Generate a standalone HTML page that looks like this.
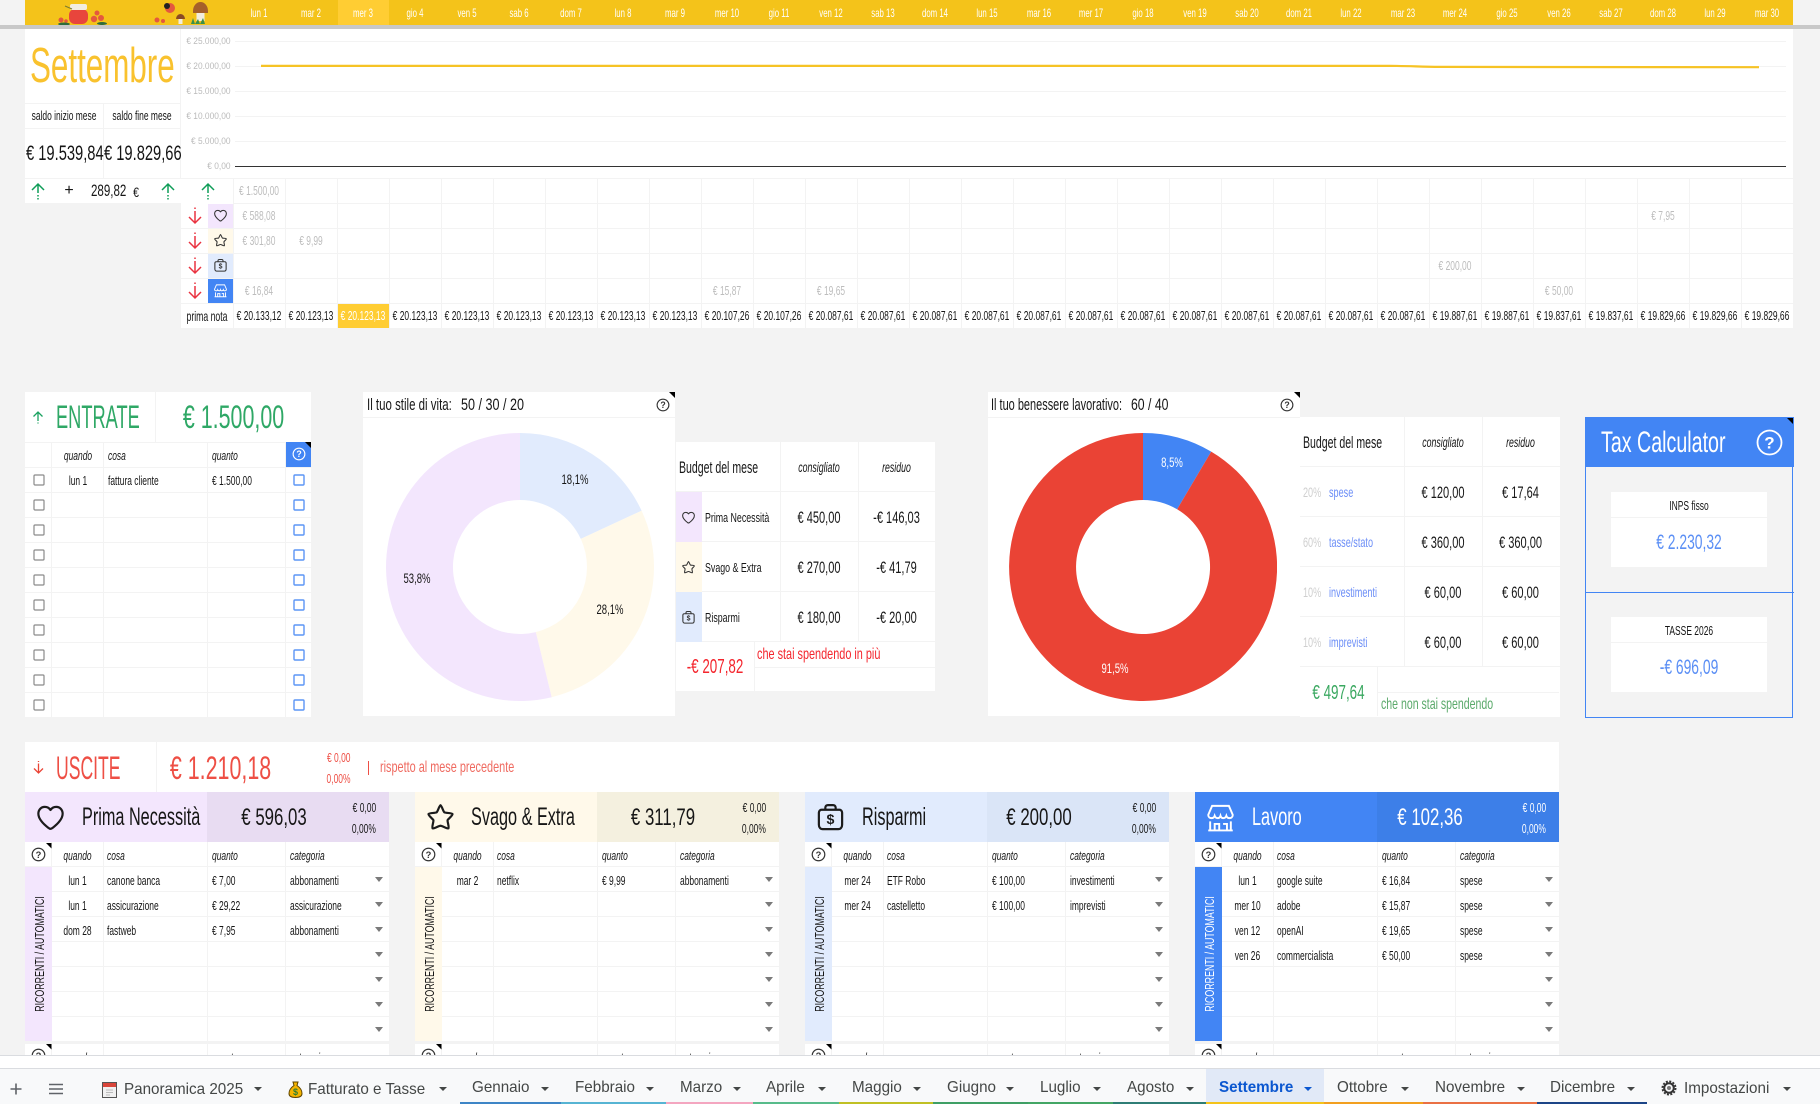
<!DOCTYPE html>
<html lang="it"><head><meta charset="utf-8"><title>Settembre</title>
<style>
html,body{margin:0;padding:0;background:#f3f3f3;width:1820px;height:1104px;overflow:hidden}
#p{position:relative;width:1820px;height:1104px;overflow:hidden;font-family:"Liberation Sans",sans-serif;color:#161616;font-size:13px}
.a{position:absolute}
.w{position:absolute;background:#fff}
.c,.l,.r{position:absolute;display:flex;align-items:center;white-space:nowrap;height:25px;transform:scaleX(var(--s,.65))}
.c{justify-content:center}
.l{justify-content:flex-start;transform-origin:0 50%}
.r{justify-content:flex-end;transform-origin:100% 50%}
.i{font-style:italic}
.d{display:flex;position:absolute;left:233px;width:1560px}
.d span{flex:0 0 52px;width:52px;min-width:0;height:25px;display:flex;align-items:center;justify-content:center;white-space:nowrap;transform:scaleX(.65)}
.hl{position:absolute;background:#f3f3f3;height:1px}
.vl{position:absolute;background:#f3f3f3;width:1px}
.t{position:absolute;top:842px;width:364px;height:213px;background:
linear-gradient(#f3f3f3,#f3f3f3) 26px 0/1px 100% no-repeat,
linear-gradient(#f3f3f3,#f3f3f3) 78px 0/1px 100% no-repeat,
linear-gradient(#f3f3f3,#f3f3f3) 182px 0/1px 100% no-repeat,
linear-gradient(#f3f3f3,#f3f3f3) 260px 0/1px 100% no-repeat,
repeating-linear-gradient(#fff 0 24px,#f3f3f3 24px 25px)}
.t .q{left:27px;width:51px}.t .n{left:82px}.t .h{left:186.5px}.t .k{left:264.5px}
.t .c,.t .l{margin-top:1px}
.gap{position:absolute;left:0;top:199px;width:364px;height:3px;background:#f3f3f3}
.lb{position:absolute;left:0;top:25px;width:26.5px;height:174px}
.rot{position:absolute;left:-86px;top:74px;width:200px;height:26px;display:flex;align-items:center;justify-content:center;white-space:nowrap;font-size:13px;transform:rotate(-90deg) scaleX(.68)}
.ch{position:absolute;top:792px;width:364px;height:50px}
.ch .rt{position:absolute;left:182px;top:0;width:182px;height:50px}
.tab{position:absolute;left:0;top:0;font-size:16px;height:36px;color:#444746;--s:.95}
.st{position:absolute;top:1101.5px;height:2.5px}
.tg{position:absolute;top:1086.5px;width:0;height:0;border-left:4px solid transparent;border-right:4px solid transparent;border-top:4.5px solid #444746}
</style></head><body><div id="p">
<svg width="0" height="0" style="position:absolute">
<symbol id="heart" viewBox="0 0 24 24"><path d="M10.6 20.2C5.6 16.4 2.6 13 2.6 9 2.6 6 4.8 3.8 7.6 3.8c1.9 0 3.4.9 4.4 2.4 1-1.5 2.5-2.4 4.4-2.4 2.8 0 5 2.2 5 5.2 0 4-3 7.4-8 11.2-.6.4-1.2.6-1.8.6z" fill="none" stroke="currentColor" stroke-width="1.7" stroke-linejoin="round"/></symbol>
<symbol id="star" viewBox="0 0 24 24"><path d="M12 2.500C13 3 14 7 15 8c1 .6 5.500.3 6.300 1.300.4 1-3.300 3.700-3.800 4.700-.3 1.200 1.400 5.500.6 6.400-.9.600-4.800-2-6.100-2s-5.200 2.600-6.100 2c-.8-.9.900-5.200.6-6.400C6 13 2.300 10.300 2.700 9.300 3.500 8.300 8 8.600 9 8c1-1 2-5 3-5.500z" fill="none" stroke="currentColor" stroke-width="1.700" stroke-linejoin="round"/></symbol>
<symbol id="bag" viewBox="0 0 24 24"><path d="M8 6V4.400C8 3 9 2.400 10 2.400h4c1 0 2 .6 2 2V6M5 6h14c1 0 2 1 2 2.200v9.400c0 2-1.200 3.400-3 3.400H6c-1.800 0-3-1.400-3-3.400V8.200C3 7 4 6 5 6z" fill="none" stroke="currentColor" stroke-width="1.700"/><text x="12" y="17" font-size="11" font-weight="700" text-anchor="middle" fill="currentColor" font-family="Liberation Sans">$</text></symbol>
<symbol id="store" viewBox="0 0 24 24"><path d="M5.500 3h13l3 7c0 1.800-1.400 2.500-2.400 2.500-1.300 0-2.300-.8-2.600-1.800-.4 1-1.300 1.800-2.300 1.800s-1.900-.8-2.200-1.800c-.3 1-1.200 1.800-2.200 1.800s-1.900-.8-2.300-1.800c-.3 1-1.300 1.800-2.600 1.800-1 0-2.400-.7-2.400-2.500zM4 15v7M20 15v7M2.500 22h19M7.500 17h3.500v5H7.500zM14 17h3v5" fill="none" stroke="currentColor" stroke-width="1.500"/></symbol>
<symbol id="qm" viewBox="0 0 16 16"><circle cx="8" cy="8" r="6.700" fill="none" stroke="currentColor" stroke-width="1.300"/><text x="8" y="11.500" font-size="10" font-weight="700" text-anchor="middle" fill="currentColor" font-family="Liberation Sans">?</text></symbol>
<symbol id="up" viewBox="0 0 16 18"><path d="M8 2v9M8 13v1.500M8 16v1.500M2 8l6-6 6 6" fill="none" stroke="currentColor" stroke-width="1.500"/></symbol>
<symbol id="dn" viewBox="0 0 16 18"><path d="M8 .5v1.500M8 4v12M2 10l6 6 6-6" fill="none" stroke="currentColor" stroke-width="1.500"/></symbol>
<symbol id="drops" viewBox="0 0 9 175"><path fill="#7a7a7a" d="M0 10h8l-4 5zM0 35h8l-4 5zM0 60h8l-4 5zM0 85h8l-4 5zM0 110h8l-4 5zM0 135h8l-4 5zM0 160h8l-4 5z"/></symbol>
<symbol id="corner" viewBox="0 0 6 6"><path d="M0 0h6v6z" fill="#000"/></symbol>
</svg>

<!-- top bar -->
<div class="a" style="left:25px;top:0;width:1768px;height:25px;background:#f4c31a"></div>
<div class="a" style="left:0;top:25px;width:1820px;height:4px;background:#c8c8c8"></div>
<div class="a" style="left:338px;top:0;width:51px;height:25px;background:#ffcd33"></div>
<svg class="a" style="left:40px;top:0" width="190" height="25">
<rect x="29" y="9" width="19" height="15" rx="6" fill="#e8453c"/><rect x="30" y="4" width="17" height="6" rx="2" fill="#f2ede0"/><path d="M25 6l7 3" stroke="#7a7a30"/><circle cx="21" cy="20" r="2.500" fill="#e4583e"/><circle cx="26" cy="21" r="1.800" fill="#e4583e"/><circle cx="57" cy="13" r="2.500" fill="#e4583e"/><circle cx="54" cy="19" r="3.200" fill="#e4583e"/><circle cx="61" cy="18" r="3" fill="#e4583e"/><ellipse cx="62" cy="23.500" rx="5" ry="1.500" fill="#2e6b3a"/><ellipse cx="24" cy="24" rx="6" ry="1.500" fill="#2e6b3a"/>
<circle cx="130" cy="8" r="5" fill="#e4583e"/><circle cx="127" cy="6" r="3" fill="#222"/><circle cx="117" cy="20" r="2.500" fill="#e4583e"/><circle cx="123" cy="21" r="2" fill="#e4583e"/><path d="M136 19a4.500 5 0 0 1 9 0z" fill="#8a4a24"/><rect x="138.500" y="19" width="4" height="5" fill="#f2ede0"/><path d="M153 11a7.500 9 0 0 1 15 0v2h-15z" fill="#a5602a"/><rect x="156.500" y="13" width="8" height="8" fill="#f2ede0"/><path d="M151 24l2-6 2 6 3-5 2 5 3-6 2 6z" fill="#3b8f48"/>
</svg>
<div class="d" style="top:0;color:#fff;font-size:12px"><span>lun 1</span><span>mar 2</span><span>mer 3</span><span>gio 4</span><span>ven 5</span><span>sab 6</span><span>dom 7</span><span>lun 8</span><span>mar 9</span><span>mer 10</span><span>gio 11</span><span>ven 12</span><span>sab 13</span><span>dom 14</span><span>lun 15</span><span>mar 16</span><span>mer 17</span><span>gio 18</span><span>ven 19</span><span>sab 20</span><span>dom 21</span><span>lun 22</span><span>mar 23</span><span>mer 24</span><span>gio 25</span><span>ven 26</span><span>sab 27</span><span>dom 28</span><span>lun 29</span><span>mar 30</span></div>

<!-- month panel -->
<div class="w" style="left:25px;top:29px;width:155px;height:149px"></div>
<div class="hl" style="left:25px;top:103px;width:155px"></div>
<div class="hl" style="left:25px;top:128px;width:155px"></div>
<div class="vl" style="left:103px;top:103px;height:75px"></div>
<div class="l" style="left:30px;top:36px;height:60px;font-size:49px;color:#f9c22e;--s:.64">Settembre</div>
<div class="c" style="left:25px;top:103px;width:78px">saldo inizio mese</div>
<div class="c" style="left:104px;top:103px;width:76px">saldo fine mese</div>
<div class="l" style="left:26px;top:141px;font-size:21px;--s:.7">€ 19.539,84</div>
<div class="a" style="left:104px;top:129px;width:76.500px;height:49px;overflow:hidden"><div class="l" style="left:0;top:12px;font-size:21px;--s:.7">€ 19.829,66</div></div>

<!-- chart -->
<div class="w" style="left:181px;top:29px;width:1612px;height:149px"></div>
<div class="hl" style="left:234.500px;top:41px;width:1551px"></div>
<div class="hl" style="left:234.500px;top:66px;width:1551px"></div>
<div class="hl" style="left:234.500px;top:91px;width:1551px"></div>
<div class="hl" style="left:234.500px;top:116px;width:1551px"></div>
<div class="hl" style="left:234.500px;top:141px;width:1551px"></div>
<div class="a" style="left:234.500px;top:166px;width:1551px;height:1px;background:#333"></div>
<div class="r" style="left:170px;width:60.500px;top:29px;font-size:9.500px;color:#bbb;--s:.88">€ 25.000,00</div>
<div class="r" style="left:170px;width:60.500px;top:54px;font-size:9.500px;color:#bbb;--s:.88">€ 20.000,00</div>
<div class="r" style="left:170px;width:60.500px;top:79px;font-size:9.500px;color:#bbb;--s:.88">€ 15.000,00</div>
<div class="r" style="left:170px;width:60.500px;top:104px;font-size:9.500px;color:#bbb;--s:.88">€ 10.000,00</div>
<div class="r" style="left:170px;width:60.500px;top:129px;font-size:9.500px;color:#bbb;--s:.88">€ 5.000,00</div>
<div class="r" style="left:170px;width:60.500px;top:154px;font-size:9.500px;color:#bbb;--s:.88">€ 0,00</div>
<svg class="a" style="left:0;top:60px" width="1820" height="12"><path d="M261 5.900H1390C1410 5.900 1420 6.800 1440 6.900L1759 7.200" fill="none" stroke="#f6c325" stroke-width="2.200"/></svg>

<!-- summary row -->
<div class="w" style="left:25px;top:178px;width:208px;height:25px"></div>
<div class="hl" style="left:25px;top:178px;width:208px"></div>
<svg class="a" style="left:30px;top:182px;color:#0f9d58" width="16" height="18"><use href="#up"/></svg>
<svg class="a" style="left:160px;top:182px;color:#0f9d58" width="16" height="18"><use href="#up"/></svg>
<svg class="a" style="left:199.500px;top:182px;color:#0f9d58" width="16" height="18"><use href="#up"/></svg>
<div class="c" style="left:59px;width:20px;top:178px;font-size:16px;--s:1">+</div>
<div class="l" style="left:91px;top:178px;font-size:17px;--s:.68">289,82</div>
<div class="c" style="left:126px;width:20px;top:179px;font-size:14px;--s:.75">€</div>

<!-- day grid -->
<div class="a" style="left:233px;top:178px;width:1560px;height:150px;background:repeating-linear-gradient(90deg,#f3f3f3 0 1px,transparent 1px 52px),repeating-linear-gradient(#f3f3f3 0 1px,#fff 1px 25px)"></div>
<div class="w" style="left:181px;top:203px;width:52px;height:125px"></div>
<div class="hl" style="left:181px;top:228px;width:52px"></div><div class="hl" style="left:181px;top:253px;width:52px"></div><div class="hl" style="left:181px;top:278px;width:52px"></div><div class="hl" style="left:181px;top:303px;width:52px"></div>
<div class="a" style="left:207.500px;top:204px;width:25.500px;height:24px;background:#f3e6fd"></div>
<div class="a" style="left:207.500px;top:229px;width:25.500px;height:24px;background:#fff9ea"></div>
<div class="a" style="left:207.500px;top:254px;width:25.500px;height:24px;background:#e1ebfd"></div>
<div class="a" style="left:208px;top:279px;width:25px;height:24px;background:#4285f4"></div>
<svg class="a" style="left:186.500px;top:207px;color:#ea3340" width="16" height="18"><use href="#dn"/></svg>
<svg class="a" style="left:186.500px;top:232px;color:#ea3340" width="16" height="18"><use href="#dn"/></svg>
<svg class="a" style="left:186.500px;top:257px;color:#ea3340" width="16" height="18"><use href="#dn"/></svg>
<svg class="a" style="left:186.500px;top:282px;color:#ea3340" width="16" height="18"><use href="#dn"/></svg>
<svg class="a" style="left:213px;top:208px;color:#333" width="15" height="15"><use href="#heart"/></svg>
<svg class="a" style="left:213px;top:233px;color:#333" width="15" height="15"><use href="#star"/></svg>
<svg class="a" style="left:213px;top:258px;color:#333" width="15" height="15"><use href="#bag"/></svg>
<svg class="a" style="left:213px;top:283px;color:#fff" width="15" height="15"><use href="#store"/></svg>
<div class="a" style="left:338px;top:304px;width:51px;height:24px;background:#ffcd33"></div>
<div class="c" style="left:181px;width:52px;top:303.500px;font-size:14px;--s:.62">prima nota</div>
<div style="color:#bdbdbd">
<div class="c" style="left:233px;width:52px;top:178px">€ 1.500,00</div>
<div class="c" style="left:233px;width:52px;top:203px">€ 588,08</div>
<div class="c" style="left:233px;width:52px;top:228px">€ 301,80</div>
<div class="c" style="left:285px;width:52px;top:228px">€ 9,99</div>
<div class="c" style="left:233px;width:52px;top:278px">€ 16,84</div>
<div class="c" style="left:701px;width:52px;top:278px">€ 15,87</div>
<div class="c" style="left:805px;width:52px;top:278px">€ 19,65</div>
<div class="c" style="left:1429px;width:52px;top:253px">€ 200,00</div>
<div class="c" style="left:1533px;width:52px;top:278px">€ 50,00</div>
<div class="c" style="left:1637px;width:52px;top:203px">€ 7,95</div>
</div>
<div class="d" style="top:303px;font-size:13px"><span>€ 20.133,12</span><span>€ 20.123,13</span><span style="color:#fff">€ 20.123,13</span><span>€ 20.123,13</span><span>€ 20.123,13</span><span>€ 20.123,13</span><span>€ 20.123,13</span><span>€ 20.123,13</span><span>€ 20.123,13</span><span>€ 20.107,26</span><span>€ 20.107,26</span><span>€ 20.087,61</span><span>€ 20.087,61</span><span>€ 20.087,61</span><span>€ 20.087,61</span><span>€ 20.087,61</span><span>€ 20.087,61</span><span>€ 20.087,61</span><span>€ 20.087,61</span><span>€ 20.087,61</span><span>€ 20.087,61</span><span>€ 20.087,61</span><span>€ 20.087,61</span><span>€ 19.887,61</span><span>€ 19.887,61</span><span>€ 19.837,61</span><span>€ 19.837,61</span><span>€ 19.829,66</span><span>€ 19.829,66</span><span>€ 19.829,66</span></div>

<!-- ENTRATE -->
<div class="w" style="left:25px;top:392px;width:286px;height:50px"></div>
<div class="vl" style="left:155px;top:392px;height:50px"></div>
<svg class="a" style="left:30px;top:410px;color:#1aa260" width="16" height="15"><path d="M8 2v9M8 12.500v1M3.500 6.500L8 2l4.500 4.500" fill="none" stroke="currentColor" stroke-width="1.300"/></svg>
<div class="l" style="left:56px;top:392.500px;height:50px;font-size:32px;color:#2fa866;--s:.57">ENTRATE</div>
<div class="c" style="left:183px;width:101px;top:392.500px;height:50px;font-size:32px;color:#2fa866;--s:.67">€ 1.500,00</div>
<div class="a" style="left:25px;top:442px;width:286px;height:275px;background:
linear-gradient(#f3f3f3,#f3f3f3) 26px 0/1px 100% no-repeat,
linear-gradient(#f3f3f3,#f3f3f3) 78px 0/1px 100% no-repeat,
linear-gradient(#f3f3f3,#f3f3f3) 182px 0/1px 100% no-repeat,
linear-gradient(#f3f3f3,#f3f3f3) 260px 0/1px 100% no-repeat,
repeating-linear-gradient(#f3f3f3 0 1px,#fff 1px 25px)"></div>
<div class="a" style="left:286px;top:442px;width:25px;height:25px;background:#4285f4"></div>
<svg class="a" style="left:291.500px;top:447px;color:#fff" width="14" height="14"><use href="#qm"/></svg>
<svg class="a" style="left:305px;top:442px" width="6" height="6"><use href="#corner"/></svg>
<div class="c i" style="left:52px;width:52px;top:443px">quando</div>
<div class="l i" style="left:107.500px;top:443px">cosa</div>
<div class="l i" style="left:211.500px;top:443px">quanto</div>
<div class="c" style="left:52px;width:52px;top:468px">lun 1</div>
<div class="l" style="left:107.500px;top:468px">fattura cliente</div>
<div class="l" style="left:211.500px;top:468px">€ 1.500,00</div>
<svg class="a" style="left:33px;top:467px" width="12" height="250"><path fill="none" stroke="#8a8a8a" stroke-width="1.200" d="M2 8h8a1 1 0 0 1 1 1v8a1 1 0 0 1-1 1H2a1 1 0 0 1-1-1V9a1 1 0 0 1 1-1zM2 33h8a1 1 0 0 1 1 1v8a1 1 0 0 1-1 1H2a1 1 0 0 1-1-1v-8a1 1 0 0 1 1-1zM2 58h8a1 1 0 0 1 1 1v8a1 1 0 0 1-1 1H2a1 1 0 0 1-1-1v-8a1 1 0 0 1 1-1zM2 83h8a1 1 0 0 1 1 1v8a1 1 0 0 1-1 1H2a1 1 0 0 1-1-1v-8a1 1 0 0 1 1-1zM2 108h8a1 1 0 0 1 1 1v8a1 1 0 0 1-1 1H2a1 1 0 0 1-1-1v-8a1 1 0 0 1 1-1zM2 133h8a1 1 0 0 1 1 1v8a1 1 0 0 1-1 1H2a1 1 0 0 1-1-1v-8a1 1 0 0 1 1-1zM2 158h8a1 1 0 0 1 1 1v8a1 1 0 0 1-1 1H2a1 1 0 0 1-1-1v-8a1 1 0 0 1 1-1zM2 183h8a1 1 0 0 1 1 1v8a1 1 0 0 1-1 1H2a1 1 0 0 1-1-1v-8a1 1 0 0 1 1-1zM2 208h8a1 1 0 0 1 1 1v8a1 1 0 0 1-1 1H2a1 1 0 0 1-1-1v-8a1 1 0 0 1 1-1zM2 233h8a1 1 0 0 1 1 1v8a1 1 0 0 1-1 1H2a1 1 0 0 1-1-1v-8a1 1 0 0 1 1-1z"/></svg>
<svg class="a" style="left:293px;top:467px" width="12" height="250"><path fill="none" stroke="#5c95f5" stroke-width="1.400" d="M2 8h8a1 1 0 0 1 1 1v8a1 1 0 0 1-1 1H2a1 1 0 0 1-1-1V9a1 1 0 0 1 1-1zM2 33h8a1 1 0 0 1 1 1v8a1 1 0 0 1-1 1H2a1 1 0 0 1-1-1v-8a1 1 0 0 1 1-1zM2 58h8a1 1 0 0 1 1 1v8a1 1 0 0 1-1 1H2a1 1 0 0 1-1-1v-8a1 1 0 0 1 1-1zM2 83h8a1 1 0 0 1 1 1v8a1 1 0 0 1-1 1H2a1 1 0 0 1-1-1v-8a1 1 0 0 1 1-1zM2 108h8a1 1 0 0 1 1 1v8a1 1 0 0 1-1 1H2a1 1 0 0 1-1-1v-8a1 1 0 0 1 1-1zM2 133h8a1 1 0 0 1 1 1v8a1 1 0 0 1-1 1H2a1 1 0 0 1-1-1v-8a1 1 0 0 1 1-1zM2 158h8a1 1 0 0 1 1 1v8a1 1 0 0 1-1 1H2a1 1 0 0 1-1-1v-8a1 1 0 0 1 1-1zM2 183h8a1 1 0 0 1 1 1v8a1 1 0 0 1-1 1H2a1 1 0 0 1-1-1v-8a1 1 0 0 1 1-1zM2 208h8a1 1 0 0 1 1 1v8a1 1 0 0 1-1 1H2a1 1 0 0 1-1-1v-8a1 1 0 0 1 1-1zM2 233h8a1 1 0 0 1 1 1v8a1 1 0 0 1-1 1H2a1 1 0 0 1-1-1v-8a1 1 0 0 1 1-1z"/></svg>

<!-- Pie 1 -->
<div class="w" style="left:363px;top:392px;width:312px;height:324px"></div>
<div class="hl" style="left:363px;top:417px;width:312px"></div>
<div class="l" style="left:367.400px;top:392px;font-size:17px;--s:.675">Il tuo stile di vita:</div>
<div class="l" style="left:461px;top:392px;font-size:17px;--s:.74">50 / 30 / 20</div>
<svg class="a" style="left:655.500px;top:398px;color:#333" width="14" height="14"><use href="#qm"/></svg>
<svg class="a" style="left:669px;top:392px" width="6" height="6"><use href="#corner"/></svg>
<svg class="a" style="left:385.600px;top:433px" width="268" height="268" viewBox="-134 -134 268 268">
<path fill="#e1ebfd" d="M0-134A134 134 0 0 1 121.600-56.300L60.800-28.100A67 67 0 0 0 0-67Z"/>
<path fill="#fff9ea" d="M121.600-56.300A134 134 0 0 1 31.700 130.200L15.800 65.100A67 67 0 0 0 60.800-28.100Z"/>
<path fill="#f3e6fd" d="M31.700 130.200A134 134 0 1 1 0-134L0-67A67 67 0 1 0 15.800 65.100Z"/>
</svg>
<div class="c" style="left:545px;width:60px;top:466.500px;font-size:14px;--s:.68">18,1%</div>
<div class="c" style="left:580px;width:60px;top:596.500px;font-size:14px;--s:.68">28,1%</div>
<div class="c" style="left:386.500px;width:60px;top:565.500px;font-size:14px;--s:.68">53,8%</div>

<!-- Budget 1 -->
<div class="a" style="left:675.500px;top:442px;width:259.500px;height:250px;background:repeating-linear-gradient(#fff 0 49px,#f3f3f3 49px 50px)"></div>
<div class="vl" style="left:779.500px;top:442px;height:200px"></div>
<div class="vl" style="left:857.500px;top:442px;height:200px"></div>
<div class="vl" style="left:753.500px;top:642px;height:50px"></div>
<div class="hl" style="left:754px;top:667px;width:181px"></div>
<div class="a" style="left:675.500px;top:492px;width:26px;height:49.500px;background:#f3e6fd"></div>
<div class="a" style="left:675.500px;top:542px;width:26px;height:49.500px;background:#fff9ea"></div>
<div class="a" style="left:675.500px;top:592px;width:26px;height:49.500px;background:#e1ebfd"></div>
<svg class="a" style="left:681px;top:509.500px;color:#333" width="15" height="15"><use href="#heart"/></svg>
<svg class="a" style="left:681px;top:559.500px;color:#333" width="15" height="15"><use href="#star"/></svg>
<svg class="a" style="left:681px;top:609.500px;color:#333" width="15" height="15"><use href="#bag"/></svg>
<div class="l" style="left:679px;top:455px;font-size:17px;--s:.62">Budget del mese</div>
<div class="c i" style="left:780px;width:78px;top:455px;font-size:13.500px">consigliato</div>
<div class="c i" style="left:858px;width:77px;top:455px;font-size:13.500px">residuo</div>
<div class="l" style="left:705px;top:504.500px;--s:.68">Prima Necessità</div>
<div class="l" style="left:704.500px;top:554.500px;--s:.68">Svago &amp; Extra</div>
<div class="l" style="left:705px;top:604.500px;--s:.68">Risparmi</div>
<div class="c" style="left:780px;width:78px;top:505px;font-size:17px">€ 450,00</div>
<div class="c" style="left:858px;width:77px;top:505px;font-size:17px">-€ 146,03</div>
<div class="c" style="left:780px;width:78px;top:555px;font-size:17px">€ 270,00</div>
<div class="c" style="left:858px;width:77px;top:555px;font-size:17px">-€ 41,79</div>
<div class="c" style="left:780px;width:78px;top:605px;font-size:17px">€ 180,00</div>
<div class="c" style="left:858px;width:77px;top:605px;font-size:17px">-€ 20,00</div>
<div class="c" style="left:675.500px;width:78px;top:654.500px;font-size:20px;color:#f4252d;--s:.67">-€ 207,82</div>
<div class="l" style="left:757px;top:642.500px;font-size:16px;color:#f4252d;--s:.68">che stai spendendo in più</div>

<!-- Pie 2 -->
<div class="w" style="left:988px;top:392px;width:312px;height:324px"></div>
<div class="hl" style="left:988px;top:417px;width:312px"></div>
<div class="l" style="left:991.400px;top:392px;font-size:17px;--s:.645">Il tuo benessere lavorativo:</div>
<div class="l" style="left:1131px;top:392px;font-size:17px;--s:.72">60 / 40</div>
<svg class="a" style="left:1279.500px;top:398px;color:#333" width="14" height="14"><use href="#qm"/></svg>
<svg class="a" style="left:1294px;top:392px" width="6" height="6"><use href="#corner"/></svg>
<svg class="a" style="left:1009px;top:433px" width="268" height="268" viewBox="-134 -134 268 268">
<path fill="#4285f4" d="M0-134A134 134 0 0 1 68.200-115.400L34.100-57.700A67 67 0 0 0 0-67Z"/>
<path fill="#ea4335" d="M68.200-115.400A134 134 0 1 1 0-134L0-67A67 67 0 1 0 34.100-57.700Z"/>
</svg>
<div class="c" style="left:1141.500px;width:60px;top:449.500px;font-size:14px;color:#fff;--s:.68">8,5%</div>
<div class="c" style="left:1085px;width:60px;top:655.500px;font-size:14px;color:#fff;--s:.68">91,5%</div>

<!-- Budget 2 -->
<div class="a" style="left:1300px;top:417px;width:259.500px;height:300px;background:repeating-linear-gradient(#fff 0 49px,#f3f3f3 49px 50px)"></div>
<div class="vl" style="left:1403.500px;top:417px;height:250px"></div>
<div class="vl" style="left:1481.500px;top:417px;height:250px"></div>
<div class="vl" style="left:1377px;top:667px;height:50px"></div>
<div class="hl" style="left:1377px;top:692px;width:182px"></div>
<div class="a" style="left:1300px;top:716px;width:260px;height:1px;background:#fff"></div>
<div class="l" style="left:1303px;top:430px;font-size:17px;--s:.62">Budget del mese</div>
<div class="c i" style="left:1404px;width:78px;top:430px;font-size:13.500px">consigliato</div>
<div class="c i" style="left:1482px;width:77px;top:430px;font-size:13.500px">residuo</div>
<div style="color:#cfcfcf">
<div class="l" style="left:1303px;top:479.500px;font-size:14px">20%</div>
<div class="l" style="left:1303px;top:529.500px;font-size:14px">60%</div>
<div class="l" style="left:1303px;top:579.500px;font-size:14px">10%</div>
<div class="l" style="left:1303px;top:629.500px;font-size:14px">10%</div>
</div>
<div style="color:#6d8ff7">
<div class="l" style="left:1329px;top:479.500px;font-size:14px">spese</div>
<div class="l" style="left:1329px;top:529.500px;font-size:14px">tasse/stato</div>
<div class="l" style="left:1329px;top:579.500px;font-size:14px">investimenti</div>
<div class="l" style="left:1329px;top:629.500px;font-size:14px">imprevisti</div>
</div>
<div class="c" style="left:1404px;width:78px;top:480px;font-size:17px">€ 120,00</div>
<div class="c" style="left:1482px;width:77px;top:480px;font-size:17px">€ 17,64</div>
<div class="c" style="left:1404px;width:78px;top:530px;font-size:17px">€ 360,00</div>
<div class="c" style="left:1482px;width:77px;top:530px;font-size:17px">€ 360,00</div>
<div class="c" style="left:1404px;width:78px;top:580px;font-size:17px">€ 60,00</div>
<div class="c" style="left:1482px;width:77px;top:580px;font-size:17px">€ 60,00</div>
<div class="c" style="left:1404px;width:78px;top:630px;font-size:17px">€ 60,00</div>
<div class="c" style="left:1482px;width:77px;top:630px;font-size:17px">€ 60,00</div>
<div class="c" style="left:1300px;width:77px;top:680.500px;font-size:20px;color:#3aa860;--s:.67">€ 497,64</div>
<div class="l" style="left:1381px;top:692.500px;font-size:16px;color:#5aa96a;--s:.66">che non stai spendendo</div>

<!-- Tax -->
<div class="a" style="left:1585px;top:417px;width:206px;height:298.500px;border:1.500px solid #4285f4"></div>
<div class="a" style="left:1585px;top:417px;width:209px;height:50px;background:#4285f4"></div>
<div class="a" style="left:1585px;top:591.500px;width:209px;height:1.500px;background:#4285f4"></div>
<div class="l" style="left:1600.700px;top:418px;height:50px;font-size:30px;color:#fff;--s:.655">Tax Calculator</div>
<svg class="a" style="left:1755.500px;top:428.500px;color:#fff" width="27" height="27" viewBox="0 0 27 27"><circle cx="13.500" cy="13.500" r="12" fill="none" stroke="#fff" stroke-width="1.800"/><text x="13.500" y="19.500" font-size="17" font-weight="700" text-anchor="middle" fill="#fff" font-family="Liberation Sans">?</text></svg>
<svg class="a" style="left:1787px;top:418px" width="6" height="6"><use href="#corner"/></svg>
<div class="w" style="left:1611px;top:492px;width:156px;height:75px"></div>
<div class="hl" style="left:1611px;top:517px;width:156px"></div>
<div class="w" style="left:1611px;top:617px;width:156px;height:75px"></div>
<div class="hl" style="left:1611px;top:642px;width:156px"></div>
<div class="c" style="left:1611px;width:156px;top:492.500px">INPS fisso</div>
<div class="c" style="left:1611px;width:156px;top:530.500px;font-size:21px;color:#5b8ff5;--s:.66">€ 2.230,32</div>
<div class="c" style="left:1611px;width:156px;top:617.500px">TASSE 2026</div>
<div class="c" style="left:1611px;width:156px;top:655.500px;font-size:21px;color:#5b8ff5;--s:.66">-€ 696,09</div>

<!-- USCITE -->
<div class="w" style="left:25px;top:742px;width:1534px;height:50px"></div>
<div class="vl" style="left:155.500px;top:742px;height:50px"></div>
<svg class="a" style="left:31px;top:760px;color:#ea4335" width="15" height="15"><path d="M7.500 1v1M7.500 3.500v9.500M3 8.500L7.500 13 12 8.500" fill="none" stroke="currentColor" stroke-width="1.300"/></svg>
<div class="l" style="left:56px;top:743px;height:50px;font-size:32px;color:#ee4f45;--s:.55">USCITE</div>
<div class="c" style="left:170px;width:101px;top:743px;height:50px;font-size:32px;color:#ee4f45;--s:.67">€ 1.210,18</div>
<div class="r" style="left:290px;width:60.500px;top:745px;color:#ee4f45">€ 0,00</div>
<div class="r" style="left:290px;width:60.500px;top:766px;color:#ee4f45">0,00%</div>
<div class="a" style="left:368px;top:761px;width:1px;height:14px;background:#ee4f45"></div>
<div class="l" style="left:379.600px;top:755px;font-size:16px;color:#ef6a60;--s:.68">rispetto al mese precedente</div>

<!-- Prima -->
<div class="ch" style="left:25px;background:#f3e6fd"><div class="rt" style="background:#e8dcf2"></div>
<svg class="a" style="left:10px;top:10px;color:#1c1c1c" width="31" height="31"><use href="#heart"/></svg>
<div class="l" style="left:57px;top:13px;font-size:25px">Prima Necessità</div>
<div class="c" style="left:209px;width:80px;top:13px;font-size:24px;--s:.7">€ 596,03</div>
<div class="r" style="right:13px;top:2.500px">€ 0,00</div><div class="r" style="right:13px;top:23.500px">0,00%</div></div>
<div class="t" style="left:25px"><div class="gap"></div><div class="lb" style="background:#f3e6fd"><div class="rot">RICORRENTI / AUTOMATICI</div></div>
<svg class="a" style="left:6px;top:4.500px;color:#333" width="15" height="15"><use href="#qm"/></svg><svg class="a" style="left:21px;top:1px" width="5.500" height="5.500"><use href="#corner"/></svg>
<div class="c i q" style="top:0">quando</div><div class="l i n" style="top:0">cosa</div><div class="l i h" style="top:0">quanto</div><div class="l i k" style="top:0">categoria</div>
<svg class="a" style="left:350px;top:25px" width="9" height="175"><use href="#drops"/></svg>
<div class="c q" style="top:25px">lun 1</div><div class="l n" style="top:25px">canone banca</div><div class="l h" style="top:25px">€ 7,00</div><div class="l k" style="top:25px">abbonamenti</div>
<div class="c q" style="top:50px">lun 1</div><div class="l n" style="top:50px">assicurazione</div><div class="l h" style="top:50px">€ 29,22</div><div class="l k" style="top:50px">assicurazione</div>
<div class="c q" style="top:75px">dom 28</div><div class="l n" style="top:75px">fastweb</div><div class="l h" style="top:75px">€ 7,95</div><div class="l k" style="top:75px">abbonamenti</div>
<svg class="a" style="left:6px;top:206px;color:#333" width="15" height="15"><use href="#qm"/></svg><svg class="a" style="left:21px;top:202px" width="5.500" height="5.500"><use href="#corner"/></svg>
<div class="c i q" style="top:202px">quando</div><div class="l i n" style="top:202px">cosa</div><div class="l i h" style="top:202px">quanto</div><div class="l i k" style="top:202px">categoria</div></div>

<!-- Svago -->
<div class="ch" style="left:415px;background:#fff9ea"><div class="rt" style="background:#f4f0df"></div>
<svg class="a" style="left:10px;top:10px;color:#1c1c1c" width="31" height="31"><use href="#star"/></svg>
<div class="l" style="left:56px;top:13px;font-size:25px">Svago &amp; Extra</div>
<div class="c" style="left:208px;width:80px;top:13px;font-size:24px;--s:.7">€ 311,79</div>
<div class="r" style="right:13px;top:2.500px">€ 0,00</div><div class="r" style="right:13px;top:23.500px">0,00%</div></div>
<div class="t" style="left:415px"><div class="gap"></div><div class="lb" style="background:#fff9ea"><div class="rot">RICORRENTI / AUTOMATICI</div></div>
<svg class="a" style="left:6px;top:4.500px;color:#333" width="15" height="15"><use href="#qm"/></svg><svg class="a" style="left:21px;top:1px" width="5.500" height="5.500"><use href="#corner"/></svg>
<div class="c i q" style="top:0">quando</div><div class="l i n" style="top:0">cosa</div><div class="l i h" style="top:0">quanto</div><div class="l i k" style="top:0">categoria</div>
<svg class="a" style="left:350px;top:25px" width="9" height="175"><use href="#drops"/></svg>
<div class="c q" style="top:25px">mar 2</div><div class="l n" style="top:25px">netflix</div><div class="l h" style="top:25px">€ 9,99</div><div class="l k" style="top:25px">abbonamenti</div>
<svg class="a" style="left:6px;top:206px;color:#333" width="15" height="15"><use href="#qm"/></svg><svg class="a" style="left:21px;top:202px" width="5.500" height="5.500"><use href="#corner"/></svg>
<div class="c i q" style="top:202px">quando</div><div class="l i n" style="top:202px">cosa</div><div class="l i h" style="top:202px">quanto</div><div class="l i k" style="top:202px">categoria</div></div>

<!-- Risparmi -->
<div class="ch" style="left:805px;background:#e1ebfd"><div class="rt" style="background:#dae5f7"></div>
<svg class="a" style="left:10px;top:10px;color:#1c1c1c" width="31" height="31"><use href="#bag"/></svg>
<div class="l" style="left:57px;top:13px;font-size:25px">Risparmi</div>
<div class="c" style="left:194px;width:80px;top:13px;font-size:24px;--s:.7">€ 200,00</div>
<div class="r" style="right:13px;top:2.500px">€ 0,00</div><div class="r" style="right:13px;top:23.500px">0,00%</div></div>
<div class="t" style="left:805px"><div class="gap"></div><div class="lb" style="background:#e1ebfd"><div class="rot">RICORRENTI / AUTOMATICI</div></div>
<svg class="a" style="left:6px;top:4.500px;color:#333" width="15" height="15"><use href="#qm"/></svg><svg class="a" style="left:21px;top:1px" width="5.500" height="5.500"><use href="#corner"/></svg>
<div class="c i q" style="top:0">quando</div><div class="l i n" style="top:0">cosa</div><div class="l i h" style="top:0">quanto</div><div class="l i k" style="top:0">categoria</div>
<svg class="a" style="left:350px;top:25px" width="9" height="175"><use href="#drops"/></svg>
<div class="c q" style="top:25px">mer 24</div><div class="l n" style="top:25px">ETF Robo</div><div class="l h" style="top:25px">€ 100,00</div><div class="l k" style="top:25px">investimenti</div>
<div class="c q" style="top:50px">mer 24</div><div class="l n" style="top:50px">castelletto</div><div class="l h" style="top:50px">€ 100,00</div><div class="l k" style="top:50px">imprevisti</div>
<svg class="a" style="left:6px;top:206px;color:#333" width="15" height="15"><use href="#qm"/></svg><svg class="a" style="left:21px;top:202px" width="5.500" height="5.500"><use href="#corner"/></svg>
<div class="c i q" style="top:202px">quando</div><div class="l i n" style="top:202px">cosa</div><div class="l i h" style="top:202px">quanto</div><div class="l i k" style="top:202px">categoria</div></div>

<!-- Lavoro -->
<div class="ch" style="left:1195px;background:#4285f4;color:#fff"><div class="rt" style="background:#3d7fe8"></div>
<svg class="a" style="left:10px;top:10px;color:#fff" width="31" height="31"><use href="#store"/></svg>
<div class="l" style="left:57px;top:13px;font-size:25px">Lavoro</div>
<div class="c" style="left:195px;width:80px;top:13px;font-size:24px;--s:.7">€ 102,36</div>
<div class="r" style="right:13px;top:2.500px">€ 0,00</div><div class="r" style="right:13px;top:23.500px">0,00%</div></div>
<div class="t" style="left:1195px"><div class="gap"></div><div class="lb" style="background:#4285f4;color:#fff"><div class="rot">RICORRENTI / AUTOMATICI</div></div>
<svg class="a" style="left:6px;top:4.500px;color:#333" width="15" height="15"><use href="#qm"/></svg><svg class="a" style="left:21px;top:1px" width="5.500" height="5.500"><use href="#corner"/></svg>
<div class="c i q" style="top:0">quando</div><div class="l i n" style="top:0">cosa</div><div class="l i h" style="top:0">quanto</div><div class="l i k" style="top:0">categoria</div>
<svg class="a" style="left:350px;top:25px" width="9" height="175"><use href="#drops"/></svg>
<div class="c q" style="top:25px">lun 1</div><div class="l n" style="top:25px">google suite</div><div class="l h" style="top:25px">€ 16,84</div><div class="l k" style="top:25px">spese</div>
<div class="c q" style="top:50px">mer 10</div><div class="l n" style="top:50px">adobe</div><div class="l h" style="top:50px">€ 15,87</div><div class="l k" style="top:50px">spese</div>
<div class="c q" style="top:75px">ven 12</div><div class="l n" style="top:75px">openAI</div><div class="l h" style="top:75px">€ 19,65</div><div class="l k" style="top:75px">spese</div>
<div class="c q" style="top:100px">ven 26</div><div class="l n" style="top:100px">commercialista</div><div class="l h" style="top:100px">€ 50,00</div><div class="l k" style="top:100px">spese</div>
<svg class="a" style="left:6px;top:206px;color:#333" width="15" height="15"><use href="#qm"/></svg><svg class="a" style="left:21px;top:202px" width="5.500" height="5.500"><use href="#corner"/></svg>
<div class="c i q" style="top:202px">quando</div><div class="l i n" style="top:202px">cosa</div><div class="l i h" style="top:202px">quanto</div><div class="l i k" style="top:202px">categoria</div></div>

<!-- bottom bars -->
<div class="a" style="left:0;top:1055px;width:1820px;height:14px;background:#fff;border-top:1px solid #dadce0;border-bottom:1px solid #dadce0;box-sizing:border-box"></div>
<div class="a" style="left:0;top:1069px;width:1820px;height:35px;background:#f8f9fa"></div>
<div class="a" style="left:1206px;top:1069px;width:118px;height:35px;background:#e1e9f7"></div>
<svg class="a" style="left:8px;top:1081px" width="16" height="16"><path d="M8 2.500v11M2.500 8h11" stroke="#5f6368" stroke-width="1.600"/></svg>
<svg class="a" style="left:48px;top:1081px" width="16" height="16"><path d="M1 3.500h14M1 8h14M1 12.500h14" stroke="#5f6368" stroke-width="1.500"/></svg>
<svg class="a" style="left:101.500px;top:1081.500px" width="15" height="16"><rect x=".5" y=".5" width="14" height="15" fill="#f1f1f1" stroke="#555"/><rect x="1" y="1" width="13" height="4" fill="#d9463a"/><path d="M4 8h7M4 10.500h7M4 13h4" stroke="#bbb" stroke-width="1"/></svg>
<svg class="a" style="left:287.500px;top:1080.500px" width="15" height="17"><path d="M5 1h5L9 4.500c3 2 5 5 5 8 0 3-3 4-6.500 4S1 15.500 1 12.500c0-3 2-6 5-8z" fill="#f4b400" stroke="#5c4300"/><text x="7.500" y="14" font-size="9" font-weight="700" text-anchor="middle" fill="#2e7d32" font-family="Liberation Sans">$</text></svg>
<svg class="a" style="left:1661px;top:1080px" width="16" height="16"><circle cx="8" cy="8" r="4.800" fill="none" stroke="#333" stroke-width="2"/><circle cx="8" cy="8" r="6.600" fill="none" stroke="#333" stroke-width="1.800" stroke-dasharray="2 1.460"/><circle cx="8" cy="8" r="2" fill="#777"/></svg>
<div class="l tab" style="left:123.600px;top:1071.500px">Panoramica 2025</div><div class="tg" style="left:253.700px"></div>
<div class="l tab" style="left:308px;top:1071.500px">Fatturato e Tasse</div><div class="tg" style="left:439px"></div>
<div class="l tab" style="left:472.400px;top:1070px">Gennaio</div><div class="tg" style="left:541px"></div><div class="st" style="left:460px;width:101px;background:#3d85c6"></div>
<div class="l tab" style="left:574.600px;top:1070px">Febbraio</div><div class="tg" style="left:646px"></div><div class="st" style="left:561px;width:105px;background:#56b4d3"></div>
<div class="l tab" style="left:679.600px;top:1070px">Marzo</div><div class="tg" style="left:732.500px"></div><div class="st" style="left:666px;width:87.300px;background:#f4a6c0"></div>
<div class="l tab" style="left:766px;top:1070px">Aprile</div><div class="tg" style="left:818px"></div><div class="st" style="left:753.300px;width:85.300px;background:#57bb8a"></div>
<div class="l tab" style="left:851.700px;top:1070px">Maggio</div><div class="tg" style="left:913px"></div><div class="st" style="left:838.600px;width:94.700px;background:#c0c024"></div>
<div class="l tab" style="left:946.700px;top:1070px">Giugno</div><div class="tg" style="left:1006.400px"></div><div class="st" style="left:933.300px;width:94.700px;background:#3f9f65"></div>
<div class="l tab" style="left:1040px;top:1070px">Luglio</div><div class="tg" style="left:1093px"></div><div class="st" style="left:1028px;width:85.400px;background:#43a665"></div>
<div class="l tab" style="left:1126.800px;top:1070px">Agosto</div><div class="tg" style="left:1185.500px"></div><div class="st" style="left:1113.400px;width:92.600px;background:#2e7d75"></div>
<div class="l tab" style="left:1218.900px;top:1070px;font-weight:700;color:#0b57d0">Settembre</div><div class="tg" style="left:1304px;border-top-color:#0b57d0"></div><div class="st" style="left:1206px;width:118px;background:#f4c31a"></div>
<div class="l tab" style="left:1336.800px;top:1070px">Ottobre</div><div class="tg" style="left:1401.400px"></div><div class="st" style="left:1324px;width:98.500px;background:#f29f1f"></div>
<div class="l tab" style="left:1435.300px;top:1070px">Novembre</div><div class="tg" style="left:1516.800px"></div><div class="st" style="left:1422.500px;width:114.800px;background:#ea7044"></div>
<div class="l tab" style="left:1549.600px;top:1070px">Dicembre</div><div class="tg" style="left:1626.800px"></div><div class="st" style="left:1537.300px;width:109.700px;background:#1c4587"></div>
<div class="l tab" style="left:1683.600px;top:1071px">Impostazioni</div><div class="tg" style="left:1783px"></div>
</div></body></html>
